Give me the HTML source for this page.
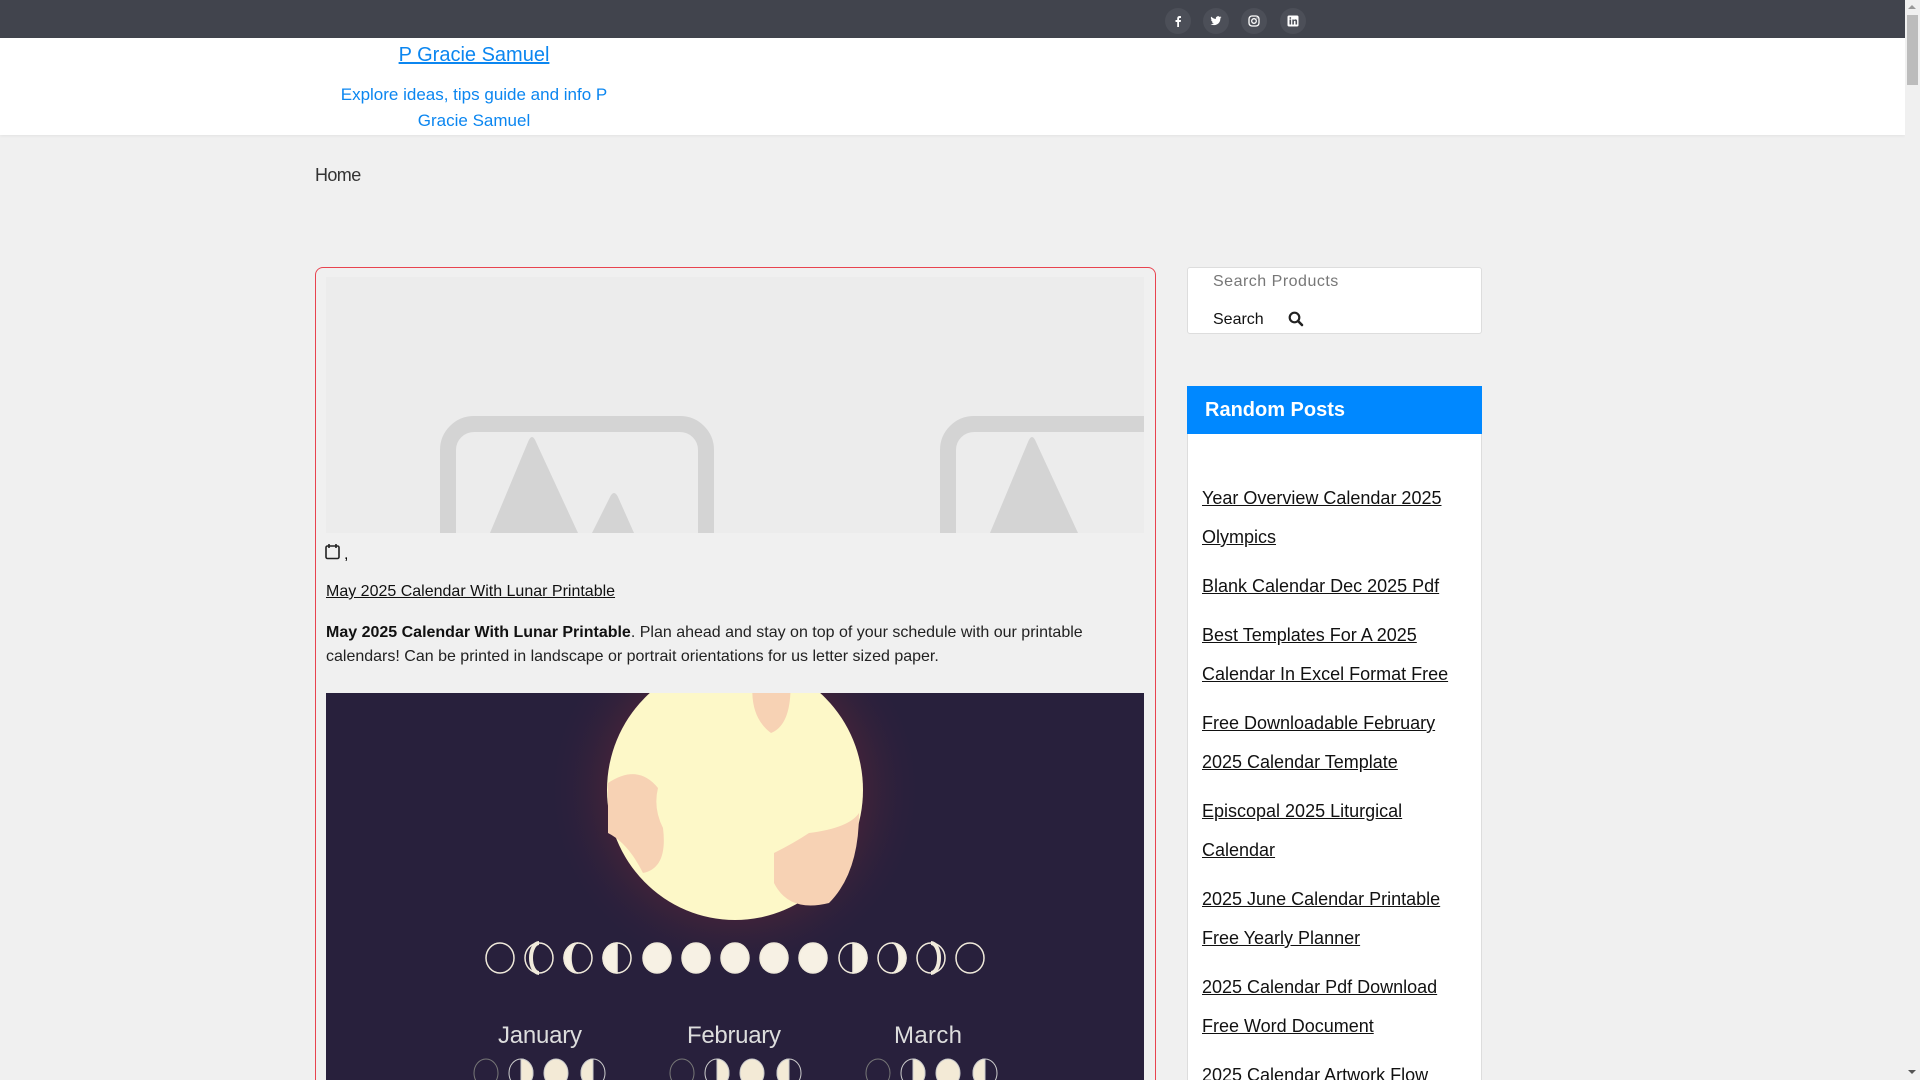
<!DOCTYPE html>
<html><head><meta charset="utf-8"><style>
*{margin:0;padding:0;box-sizing:border-box}
html,body{width:1920px;height:1080px;overflow:hidden}
body{background:#f0f0f0;font-family:"Liberation Sans",Arial,sans-serif;position:relative}
.abs{position:absolute}
a{color:inherit}
.top{left:0;top:0;width:1905px;height:38px;background:#41444d}
.soc{position:absolute;top:8px;width:26px;height:26px;border-radius:50%;background:#4c4f58;display:flex;align-items:center;justify-content:center}
.hdr{left:0;top:38px;width:1905px;height:97px;background:#fff;box-shadow:0 1px 3px rgba(0,0,0,.06)}
.sb{left:1905px;top:0;width:15px;height:1080px;background:#f0f0f0}
.card{left:315px;top:267px;width:841px;height:813px;border:1px solid #e8434f;border-bottom:none;border-radius:8px 8px 0 0}
.side{left:1187px;width:295px;background:#fff;border:1px solid #ddd}
.rp a{display:block;font-size:18px;line-height:39px;color:#111;margin-bottom:10px}
</style></head><body>
<div class="abs top">
 <div class="soc" style="left:1165px"><svg width="12" height="12" viewBox="0 0 12 12"><path d="M7 12V7h1.7l.3-2H7V4c0-.6.2-1 1-1h1V1.2C8.7 1.1 8.2 1 7.6 1 6.2 1 5.2 1.9 5.2 3.4V5H3.5v2h1.7v5z" fill="#fff"/></svg></div>
 <div class="soc" style="left:1203px"><svg width="12" height="12" viewBox="0 0 24 24"><path d="M23 4.6c-.8.4-1.7.6-2.6.7.9-.6 1.6-1.4 2-2.5-.9.5-1.9.9-2.9 1.1a4.5 4.5 0 0 0-7.7 4.1C8 7.8 4.7 6 2.5 3.300a4.5 4.5 0 0 0 1.4 6c-.7 0-1.4-.2-2-.6 0 2.2 1.5 4 3.6 4.4-.7.2-1.4.2-2 .1.6 1.8 2.3 3.1 4.2 3.1A9 9 0 0 1 1 18.2 12.8 12.8 0 0 0 20.7 7.4v-.6c.9-.6 1.7-1.400 2.3-2.2z" fill="#fff"/></svg></div>
 <div class="soc" style="left:1241px"><svg width="12" height="12" viewBox="0 0 12 12"><rect x="1" y="1" width="10" height="10" rx="3" fill="none" stroke="#fff" stroke-width="1.3"/><circle cx="6" cy="6" r="2.3" fill="none" stroke="#fff" stroke-width="1.3"/><circle cx="9" cy="3" r=".6" fill="#fff"/></svg></div>
 <div class="soc" style="left:1280px"><svg width="12" height="12" viewBox="0 0 12 12"><rect x="0.5" y="0.5" width="11" height="11" rx="1.5" fill="#fff"/><rect x="2.5" y="4.5" width="1.6" height="5" fill="#4c4f58"/><circle cx="3.3" cy="3" r=".9" fill="#4c4f58"/><path d="M5.3 4.5h1.5v.8c.4-.6 1-.9 1.7-.9 1.2 0 1.6.8 1.6 2v3.1H8.5V6.8c0-.6-.2-1-.7-1s-.9.4-.9 1v2.7H5.3z" fill="#4c4f58"/></svg></div>
</div>
<div class="abs hdr">
 <div class="abs" style="left:340px;top:3px;width:268px;text-align:center;font-size:20px;line-height:28px;color:#0b86f0"><a href="#" style="color:#0b86f0">P Gracie Samuel</a></div>
 <div class="abs" style="left:330px;top:44px;width:288px;text-align:center;font-size:17px;line-height:26px;color:#0b86f0">Explore ideas, tips guide and info P Gracie Samuel</div>
</div>
<div class="abs sb"><div style="position:absolute;left:2px;top:15px;width:11px;height:70px;background:#bcbcbc"></div><div style="position:absolute;left:3px;top:5px;border-left:4px solid transparent;border-right:4px solid transparent;border-bottom:4px solid #999"></div><div style="position:absolute;left:3px;bottom:6px;border-left:4px solid transparent;border-right:4px solid transparent;border-top:4px solid #555"></div></div>
<div class="abs" style="left:315px;top:165px;font-size:18px;color:#333;letter-spacing:-.6px">Home</div>

<div class="abs card"></div>
<div class="abs" style="left:326px;top:277px;width:818px;height:256px;background:#ececec;overflow:hidden">
 <svg width="818" height="256"><rect x="122" y="147" width="258" height="140" rx="26" fill="none" stroke="#d4d4d4" stroke-width="16"/><path d="M164 256 L202 165 Q206 155 210 165 L252 256Z M266 256 L284 220 Q288 212 292 220 L308 256Z" fill="#d4d4d4"/><rect x="622" y="147" width="258" height="140" rx="26" fill="none" stroke="#d4d4d4" stroke-width="16"/><path d="M664 256 L702 165 Q706 155 710 165 L752 256Z" fill="#d4d4d4"/></svg>
</div>
<svg class="abs" style="left:325px;top:543px" width="16" height="17" viewBox="0 0 16 17"><rect x="1" y="3" width="13" height="12.5" rx="1.5" fill="none" stroke="#222" stroke-width="1.6"/><path d="M4 1v4M11 1v4" stroke="#222" stroke-width="1.6"/></svg>
<div class="abs" style="left:344px;top:546px;font-size:16px">,</div>
<div class="abs" style="left:326px;top:583px;font-size:16px;color:#111"><a href="#" style="color:#111">May 2025 Calendar With Lunar Printable</a></div>
<div class="abs" style="left:326px;top:621px;width:818px;font-size:16px;line-height:24px;color:#222"><b style="color:#111">May 2025 Calendar With Lunar Printable</b>. Plan ahead and stay on top of your schedule with our printable calendars! Can be printed in landscape or portrait orientations for us letter sized paper.</div>
<svg class="abs" style="left:326px;top:693px" width="818" height="387" viewBox="0 0 818 387">
 <defs><radialGradient id="g" cx="409" cy="97" r="190" gradientUnits="userSpaceOnUse"><stop offset=".66" stop-color="#4a2438"/><stop offset="1" stop-color="#28203c" stop-opacity="0"/></radialGradient></defs>
 <rect width="818" height="387" fill="#28203c"/>
 <circle cx="409" cy="97" r="190" fill="url(#g)" opacity=".7"/>
 <ellipse cx="409" cy="97" rx="128" ry="130" fill="#fdf8c8"/>
 <path d="M430 -30 q-12 50 15 70 q25 -10 18 -70z M282 90 q30 -20 50 5 q-5 20 5 40 q5 40 -20 45 q-15 -30 -35 -40z M448 160 q20 -10 35 -20 q40 -5 50 -20 q0 60 -30 90 q-40 10 -55 -20z" fill="#f7d2b4"/>
 <g fill="#f7f1e4" stroke="#f0eadb" stroke-width="1.5">
  <g fill="none"><ellipse cx="174" cy="265" rx="14" ry="15"/><ellipse cx="644" cy="265" rx="14" ry="15"/></g>
  <ellipse cx="213" cy="265" rx="14" ry="15" fill="none"/><path d="M213 250 a8 15 0 0 0 0 30" stroke-width="4" fill="none"/>
  <ellipse cx="252" cy="265" rx="14" ry="15" fill="none"/><path d="M252 250 a14 15 0 0 0 0 30 a7 15 0 0 1 0 -30z"/>
  <ellipse cx="291" cy="265" rx="14" ry="15" fill="none"/><path d="M291 250 a14 15 0 0 0 0 30z"/>
  <ellipse cx="331" cy="265" rx="14" ry="15"/><ellipse cx="370" cy="265" rx="14" ry="15"/><ellipse cx="409" cy="265" rx="14" ry="15"/><ellipse cx="448" cy="265" rx="14" ry="15"/><ellipse cx="487" cy="265" rx="14" ry="15"/>
  <ellipse cx="527" cy="265" rx="14" ry="15" fill="none"/><path d="M527 250 a14 15 0 0 1 0 30z"/>
  <ellipse cx="566" cy="265" rx="14" ry="15" fill="none"/><path d="M566 250 a14 15 0 0 1 0 30 a7 15 0 0 0 0 -30z"/>
  <ellipse cx="605" cy="265" rx="14" ry="15" fill="none"/><path d="M605 250 a8 15 0 0 1 0 30" stroke-width="4" fill="none"/>
 </g>
 <g font-family="Liberation Sans,sans-serif" font-size="24" fill="#ddd" text-anchor="middle"><text x="214" y="350" textLength="84">January</text><text x="408" y="350" textLength="94">February</text><text x="602" y="350" textLength="68">March</text></g>
 <g fill="#f3ead6" stroke="#ccc" stroke-width="1">
  <g id="m"><ellipse cx="160" cy="380" rx="12" ry="14" fill="none" stroke="#777"/><ellipse cx="195" cy="380" rx="12" ry="14" fill="none"/><path d="M195 366 a12 14 0 0 1 0 28z"/><ellipse cx="230" cy="380" rx="12" ry="14"/><ellipse cx="267" cy="380" rx="12" ry="14" fill="none"/><path d="M267 366 a12 14 0 0 0 0 28z"/></g>
  <use href="#m" x="196"/><use href="#m" x="392"/>
 </g>
</svg>

<div class="abs side" style="top:267px;height:67px;border-radius:3px">
 <div class="abs" style="left:25px;top:5px;font-size:16px;color:#777;letter-spacing:.5px">Search Products</div>
 <div class="abs" style="left:25px;top:43px;font-size:16px;color:#111">Search</div>
 <svg class="abs" style="left:100px;top:43px" width="16" height="16" viewBox="0 0 16 16"><circle cx="6.5" cy="6.5" r="4.8" fill="none" stroke="#222" stroke-width="2.2"/><path d="M10 10l4 4" stroke="#222" stroke-width="2.6" stroke-linecap="round"/></svg>
</div>
<div class="abs side" style="top:386px;height:694px;border-bottom:none">
 <div style="height:48px;background:#0088ff;color:#fff;font-weight:bold;font-size:20px;line-height:48px;padding-left:18px;margin:-1px -1px 0">Random Posts</div>
 <div class="rp" style="padding:45px 14px 0 14px">
  <a href="#">Year Overview Calendar 2025 Olympics</a>
  <a href="#">Blank Calendar Dec 2025 Pdf</a>
  <a href="#">Best Templates For A 2025 Calendar In Excel Format Free</a>
  <a href="#">Free Downloadable February 2025 Calendar Template</a>
  <a href="#">Episcopal 2025 Liturgical Calendar</a>
  <a href="#">2025 June Calendar Printable Free Yearly Planner</a>
  <a href="#">2025 Calendar Pdf Download Free Word Document</a>
  <a href="#">2025 Calendar Artwork Flow</a>
 </div>
</div>
</body></html>
